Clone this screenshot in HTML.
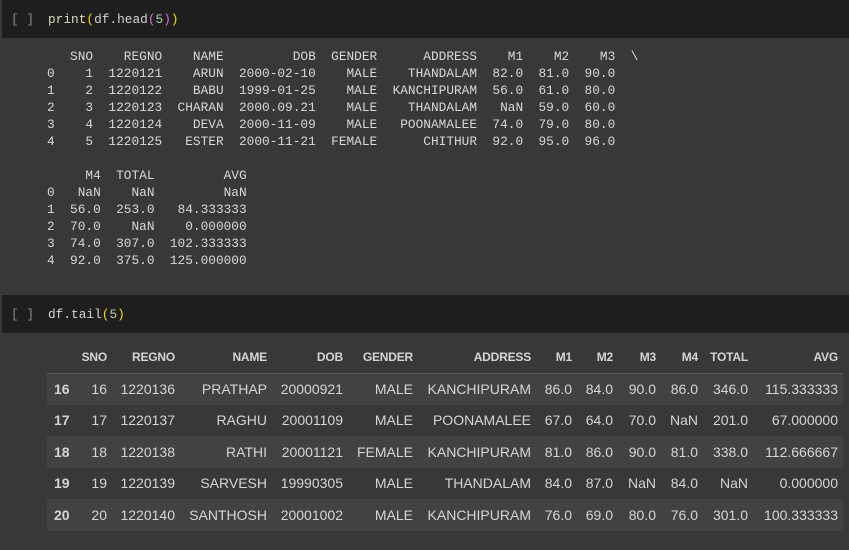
<!DOCTYPE html>
<html><head><meta charset="utf-8"><style>
*{margin:0;padding:0;box-sizing:border-box}
body{width:849px;height:550px;background:#383838;overflow:hidden;position:relative;font-family:"Liberation Sans",Arial,sans-serif;color:#d5d5d5}
.cell{position:absolute;left:2px;right:0;height:38px;background:#1e1e1e}
.br{position:absolute;left:11px;font:12.8px "Liberation Mono",monospace;color:#8a8a8a;line-height:17px}
.code{position:absolute;left:48px;font:12.8px "Liberation Mono",monospace;color:#d4d4d4;line-height:17px;white-space:pre}
pre{position:absolute;left:47px;top:48px;font:12.8px/17px "Liberation Mono",monospace;color:#d8d8d8}
table{position:absolute;left:47px;top:341px;border-collapse:collapse;table-layout:fixed;width:796px;font-size:14px}
th,td{text-align:right;padding:0 5px 0 0;white-space:nowrap}
thead th{font-size:12px;font-weight:bold;height:32px;border-bottom:1px solid #5a5a5a;letter-spacing:-0.2px}
tbody th{text-align:left;padding-left:7px;font-weight:bold}
tbody tr{height:31.5px}
tbody tr:nth-child(odd){background:#424242}
.y{color:#ffd700}.p{color:#da70d6}.f{color:#dcdcaa}.n{color:#b5cea8}
</style></head><body>
<div class="cell" style="top:0"></div>
<div class="br" style="top:11px">[ ]</div>
<div class="code" style="top:11px"><span class="f">print</span><span class="y">(</span>df.head<span class="p">(</span><span class="n">5</span><span class="p">)</span><span class="y">)</span></div>
<pre>   SNO    REGNO    NAME         DOB  GENDER      ADDRESS    M1    M2    M3  \
0    1  1220121    ARUN  2000-02-10    MALE    THANDALAM  82.0  81.0  90.0   
1    2  1220122    BABU  1999-01-25    MALE  KANCHIPURAM  56.0  61.0  80.0   
2    3  1220123  CHARAN  2000.09.21    MALE    THANDALAM   NaN  59.0  60.0   
3    4  1220124    DEVA  2000-11-09    MALE   POONAMALEE  74.0  79.0  80.0   
4    5  1220125   ESTER  2000-11-21  FEMALE      CHITHUR  92.0  95.0  96.0   

     M4  TOTAL         AVG  
0   NaN    NaN         NaN  
1  56.0  253.0   84.333333  
2  70.0    NaN    0.000000  
3  74.0  307.0  102.333333  
4  92.0  375.0  125.000000  </pre>
<div class="cell" style="top:295px"></div>
<div class="br" style="top:306px">[ ]</div>
<div class="code" style="top:306px">df.tail<span class="y">(</span><span class="n">5</span><span class="y">)</span></div>
<table>
<colgroup><col style="width:33px"><col style="width:32px"><col style="width:68px"><col style="width:92px"><col style="width:76px"><col style="width:70px"><col style="width:118px"><col style="width:41px"><col style="width:41px"><col style="width:43px"><col style="width:42px"><col style="width:50px"><col style="width:90px"></colgroup>
<thead><tr><th></th><th>SNO</th><th>REGNO</th><th>NAME</th><th>DOB</th><th>GENDER</th><th>ADDRESS</th><th>M1</th><th>M2</th><th>M3</th><th>M4</th><th>TOTAL</th><th>AVG</th></tr></thead>
<tbody>
<tr><th>16</th><td>16</td><td>1220136</td><td>PRATHAP</td><td>20000921</td><td>MALE</td><td>KANCHIPURAM</td><td>86.0</td><td>84.0</td><td>90.0</td><td>86.0</td><td>346.0</td><td>115.333333</td></tr>
<tr><th>17</th><td>17</td><td>1220137</td><td>RAGHU</td><td>20001109</td><td>MALE</td><td>POONAMALEE</td><td>67.0</td><td>64.0</td><td>70.0</td><td>NaN</td><td>201.0</td><td>67.000000</td></tr>
<tr><th>18</th><td>18</td><td>1220138</td><td>RATHI</td><td>20001121</td><td>FEMALE</td><td>KANCHIPURAM</td><td>81.0</td><td>86.0</td><td>90.0</td><td>81.0</td><td>338.0</td><td>112.666667</td></tr>
<tr><th>19</th><td>19</td><td>1220139</td><td>SARVESH</td><td>19990305</td><td>MALE</td><td>THANDALAM</td><td>84.0</td><td>87.0</td><td>NaN</td><td>84.0</td><td>NaN</td><td>0.000000</td></tr>
<tr><th>20</th><td>20</td><td>1220140</td><td>SANTHOSH</td><td>20001002</td><td>MALE</td><td>KANCHIPURAM</td><td>76.0</td><td>69.0</td><td>80.0</td><td>76.0</td><td>301.0</td><td>100.333333</td></tr>
</tbody></table>
</body></html>
